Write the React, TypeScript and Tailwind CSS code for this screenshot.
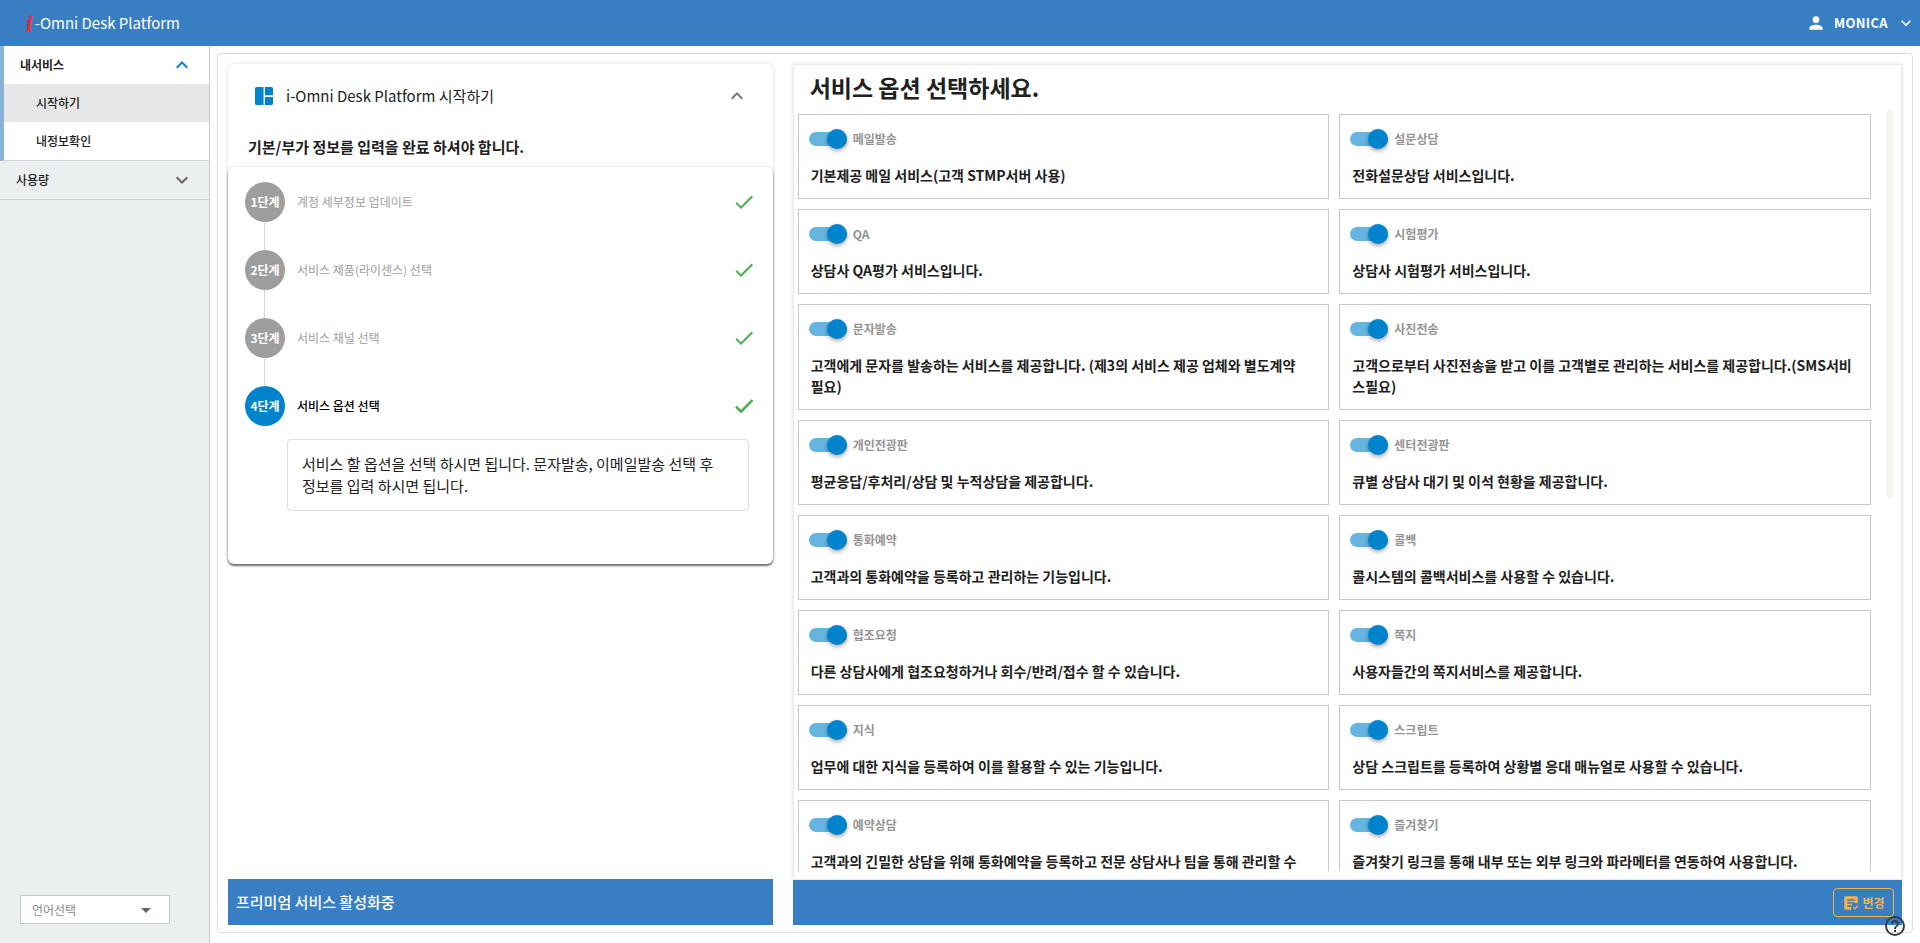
import React, { useId, useState } from "react";

const PATHS = {
  chevronUp: "M7.41,15.41L12,10.83L16.59,15.41L18,14L12,8L6,14L7.41,15.41Z",
  chevronDown: "M7.41,8.58L12,13.17L16.59,8.58L18,10L12,16L6,10L7.41,8.58Z",
  check: "M21,7L9,19L3.5,13.5L4.91,12.09L9,16.17L19.59,5.59L21,7Z",
  menuDown: "M7,10L12,15L17,10H7Z",
  account:
    "M12,4A4,4 0 0,1 16,8A4,4 0 0,1 12,12A4,4 0 0,1 8,8A4,4 0 0,1 12,4M12,14C16.42,14 20,15.79 20,18V20H4V18C4,15.79 7.58,14 12,14Z",
  dashboard:
    "M4.5,3H11.5V21H4.5A1.5,1.5 0 0,1 3,19.5V4.5A1.5,1.5 0 0,1 4.5,3M13,3H19.5A1.5,1.5 0 0,1 21,4.5V11.3H13V3M13,13H21V19.5A1.5,1.5 0 0,1 19.5,21H13V13Z",
  textBoxCheck:
    "M17,21L14.25,18L15.41,16.84L17,18.43L20.59,14.84L21.75,16.25L17,21ZM12.8,21H5C3.89,21 3,20.11 3,19V5C3,3.89 3.89,3 5,3H19C20.11,3 21,3.89 21,5V12.8C20.39,12.45 19.72,12.2 19,12.08C18.67,12.03 18.34,12 18,12C14.69,12 12,14.69 12,18C12,19.09 12.29,20.12 12.8,21ZM12,17H7V15H12ZM14.68,13H7V11H17V12.08C16.15,12.22 15.37,12.54 14.68,13ZM17,9H7V7H17Z",
  help: "M11,18H13V16H11V18M12,2A10,10 0 0,0 2,12A10,10 0 0,0 12,22A10,10 0 0,0 22,12A10,10 0 0,0 12,2M12,20C7.59,20 4,16.41 4,12C4,7.59 7.59,4 12,4C16.41,4 20,7.59 20,12C20,16.41 16.41,20 12,20M12,6A4,4 0 0,0 8,10H10A2,2 0 0,1 12,8A2,2 0 0,1 14,10C14,12 11,11.75 11,15H13C13,12.75 16,12.5 16,10A4,4 0 0,0 12,6Z",
};

function Icon({ name, className }: { name: keyof typeof PATHS; className: string }) {
  return (
    <svg viewBox="0 0 24 24" fill="currentColor" aria-hidden="true" className={`shrink-0 ${className}`}>
      <path fillRule="evenodd" d={PATHS[name]} />
    </svg>
  );
}

const STEPS = ["계정 세부정보 업데이트", "서비스 제품(라이센스) 선택", "서비스 채널 선택", "서비스 옵션 선택"];

interface Option {
  title: string;
  text: string;
  splitWords?: boolean;
}

const OPTIONS: Option[] = [
  { title: "메일발송", text: "기본제공 메일 서비스(고객 STMP서버 사용)" },
  { title: "설문상담", text: "전화설문상담 서비스입니다." },
  { title: "QA", text: "상담사 QA평가 서비스입니다." },
  { title: "시험평가", text: "상담사 시험평가 서비스입니다." },
  {
    title: "문자발송",
    text: "고객에게 문자를 발송하는 서비스를 제공합니다. (제3의 서비스 제공 업체와 별도계약 필요)",
  },
  {
    title: "사진전송",
    text: "고객으로부터 사진전송을 받고 이를 고객별로 관리하는 서비스를 제공합니다.(SMS서비스필요)",
    splitWords: true,
  },
  { title: "개인전광판", text: "평균응답/후처리/상담 및 누적상담을 제공합니다." },
  { title: "센터전광판", text: "큐별 상담사 대기 및 이석 현황을 제공합니다." },
  { title: "통화예약", text: "고객과의 통화예약을 등록하고 관리하는 기능입니다." },
  { title: "콜백", text: "콜시스템의 콜백서비스를 사용할 수 있습니다." },
  { title: "협조요청", text: "다른 상담사에게 협조요청하거나 회수/반려/접수 할 수 있습니다." },
  { title: "쪽지", text: "사용자들간의 쪽지서비스를 제공합니다." },
  { title: "지식", text: "업무에 대한 지식을 등록하여 이를 활용할 수 있는 기능입니다." },
  { title: "스크립트", text: "상담 스크립트를 등록하여 상황별 응대 매뉴얼로 사용할 수 있습니다." },
  {
    title: "예약상담",
    text: "고객과의 긴밀한 상담을 위해 통화예약을 등록하고 전문 상담사나 팀을 통해 관리할 수 있습니다.",
  },
  { title: "즐겨찾기", text: "즐겨찾기 링크를 통해 내부 또는 외부 링크와 파라메터를 연동하여 사용합니다." },
];

function OptionCard({ title, text, splitWords }: Option) {
  const id = useId();
  const [on, setOn] = useState(true);
  return (
    <article className="border border-[#c8c8c8] p-3">
      <div className="flex h-6 items-center gap-1.5">
        <input
          id={id}
          type="checkbox"
          role="switch"
          checked={on}
          onChange={(e) => setOn(e.target.checked)}
          className="relative -ml-0.5 h-3.5 w-[38px] shrink-0 cursor-pointer appearance-none rounded-full bg-[#bdbdbd] before:absolute before:-top-[3px] before:left-0 before:size-5 before:rounded-full before:bg-white before:shadow-[0_2px_4px_rgba(0,0,0,0.35)] checked:bg-[#66b5e1] checked:before:left-[18px] checked:before:bg-[#0083cd]"
        />
        <label htmlFor={id} className="cursor-pointer text-xs font-bold text-[#949494]">
          {title}
        </label>
      </div>
      <p className={`mt-3.5 text-sm leading-[21px] font-bold ${splitWords ? "break-normal" : "break-keep"}`}>{text}</p>
    </article>
  );
}

function Header() {
  return (
    <header className="flex h-[46px] shrink-0 items-center justify-between bg-[#387ec2] pr-1 pl-[26px] text-white">
      <h1 className="flex items-center gap-0.5 text-[15px] font-normal">
        <span className="font-['Liberation_Serif',serif] text-2xl font-bold text-[#f02a2a] italic">i</span>
        <span>-Omni Desk Platform</span>
      </h1>
      <button type="button" className="flex items-center text-[13px] font-bold">
        <Icon name="account" className="mr-2 size-5" />
        <span className="tracking-wide">MONICA</span>
        <Icon name="chevronDown" className="ml-2 size-5" />
      </button>
    </header>
  );
}

function Sidebar() {
  return (
    <aside className="flex w-[210px] shrink-0 flex-col justify-between border-r border-[#c9cccd] bg-[#ebefef]">
      <nav className="text-xs font-medium">
        <div className="border-b border-l-4 border-b-[#d0d4d4] border-l-[#8ab3da] bg-white">
          <button type="button" className="flex h-[38px] w-full items-center justify-between pr-[15px] pl-4 font-bold">
            내서비스
            <Icon name="chevronUp" className="size-6 text-[#0083cd]" />
          </button>
          <a href="#start" className="flex h-[38px] items-center bg-[#e7e7e7] pl-8">
            시작하기
          </a>
          <a href="#info" className="flex h-[38px] items-center pl-8">
            내정보확인
          </a>
        </div>
        <button
          type="button"
          className="flex h-[39px] w-full items-center justify-between border-b border-[#c9cccd] pr-[15px] pl-4 font-medium"
        >
          사용량
          <Icon name="chevronDown" className="size-6 text-[#666]" />
        </button>
      </nav>
      <div className="relative mb-[19px] ml-5 w-[150px]">
        <select
          aria-label="언어선택"
          defaultValue=""
          className="h-[29px] w-full appearance-none border border-[#c8c8c8] bg-white pl-[11px] text-xs text-[#8c8c8c]"
        >
          <option value="">언어선택</option>
          <option value="ko">한국어</option>
          <option value="en">English</option>
        </select>
        <Icon name="menuDown" className="pointer-events-none absolute top-[3px] right-3 size-6 text-[#666]" />
      </div>
    </aside>
  );
}

function StepsPanel() {
  return (
    <section className="flex min-h-0 flex-col justify-between p-2.5">
      <div className="rounded-md shadow-[0_0_4px_rgba(0,0,0,0.15)]">
        <div className="flex h-16 items-center px-6">
          <Icon name="dashboard" className="mr-2.5 size-6 text-[#0083cd]" />
          <h2 className="flex-1 text-[15px]">i-Omni Desk Platform 시작하기</h2>
          <button type="button" aria-label="접기" className="text-[#757575]">
            <Icon name="chevronUp" className="size-6" />
          </button>
        </div>
        <p className="h-[39px] px-5 pt-2 text-[15px] leading-[22px] font-bold">기본/부가 정보를 입력을 완료 하셔야 합니다.</p>
        <div className="rounded-md px-[17px] pt-[15px] pb-[53px] shadow-[0_2px_2px_rgba(0,0,0,0.5),0_0_3px_rgba(0,0,0,0.2)] [clip-path:inset(-1px_-3px_-6px_-3px)]">
          <ol>
            {STEPS.map((label, i) => {
              const active = i === STEPS.length - 1;
              return (
                <li key={label}>
                  <div className="flex items-center">
                    <span
                      className={`flex size-10 items-center justify-center rounded-full text-xs font-bold text-white ${active ? "bg-[#0083cd]" : "bg-[#9e9e9e]"}`}
                    >
                      {i + 1}단계
                    </span>
                    <span className={`ml-3 flex-1 text-xs ${active ? "font-medium text-black" : "text-[#9e9e9e]"}`}>{label}</span>
                    <Icon
                      name="check"
                      className={`size-6 text-[#4caf50] ${active ? "stroke-current stroke-[0.7]" : ""}`}
                    />
                  </div>
                  {!active && <div className="ml-[19px] h-7 w-px bg-[#d8d8d8]" />}
                </li>
              );
            })}
          </ol>
          <p className="mt-[13px] mr-[7px] ml-[42px] rounded border border-[#dedede] px-3.5 py-[13px] text-[15px] leading-[22px] break-keep">
            서비스 할 옵션을 선택 하시면 됩니다. 문자발송, 이메일발송 선택 후 정보를 입력 하시면 됩니다.
          </p>
        </div>
      </div>
      <footer className="-mb-[3px] flex h-[46px] shrink-0 items-center bg-[#387ec2] pl-2 text-[15px] font-medium text-white">
        프리미엄 서비스 활성화중
      </footer>
    </section>
  );
}

function OptionsPanel() {
  return (
    <section className="col-span-2 flex min-h-0 flex-col p-2.5">
      <div className="flex min-h-0 flex-1 flex-col border border-[#e9e9e9] pb-2 shadow-[0_0_4px_rgba(0,0,0,0.12)]">
        <h2 className="h-[45px] shrink-0 pl-4 text-[23px] leading-[45px] font-bold">서비스 옵션 선택하세요.</h2>
        <div className="flex min-h-0 flex-1 pr-2 pl-1">
          <div className="min-h-0 flex-1 overflow-hidden pt-1">
            <div className="mr-[15px] grid grid-cols-2 gap-2.5">
              {OPTIONS.map((option) => (
                <OptionCard key={option.title} {...option} />
              ))}
            </div>
          </div>
          <div className="h-[51%] w-[7px] rounded-full bg-[#f5f5f0]" />
        </div>
      </div>
      <footer className="-mb-[3px] flex h-[45px] shrink-0 items-center justify-end bg-[#387ec2] pr-2">
        <button
          type="button"
          className="flex h-[29px] w-[61px] items-center justify-center gap-0.5 rounded border border-[#f0b350] text-xs font-bold text-[#f0b350]"
        >
          <Icon name="textBoxCheck" className="size-[18px]" />
          변경
        </button>
      </footer>
    </section>
  );
}

export default function App() {
  return (
    <div className="relative flex h-screen flex-col overflow-hidden bg-white font-['Noto_Sans_CJK_KR',sans-serif] text-[#212121]">
      <Header />
      <div className="flex min-h-0 flex-1">
        <Sidebar />
        <main className="mx-[7px] mt-[7px] mb-2.5 grid min-w-0 flex-1 grid-cols-3 grid-rows-1 rounded border border-[#dedede]">
          <StepsPanel />
          <OptionsPanel />
        </main>
      </div>
      <button type="button" aria-label="도움말" className="absolute right-[13px] bottom-[5px] text-[#3c3c3c]">
        <Icon name="help" className="size-6" />
      </button>
    </div>
  );
}
